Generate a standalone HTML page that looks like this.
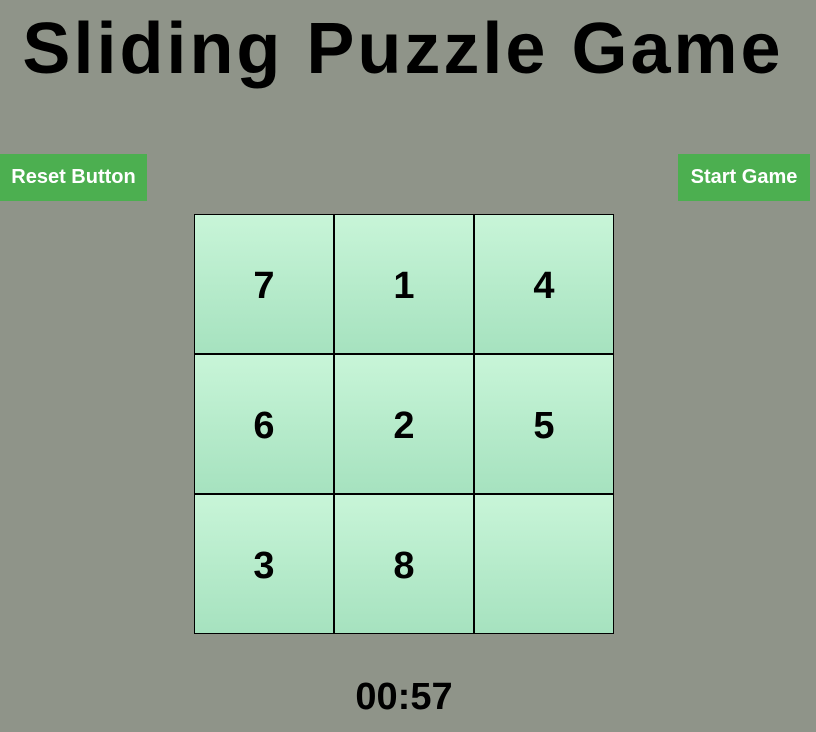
<!DOCTYPE html>
<html><head><style>
html,body{margin:0;padding:0;width:816px;height:732px;overflow:hidden;background:#8f9489;font-family:"Liberation Sans",sans-serif;}
h1{position:absolute;left:-5px;width:816px;top:5px;margin:0;text-align:center;font-size:72px;font-weight:bold;color:#000;letter-spacing:3px;line-height:88px;}
.btn{position:absolute;top:154px;height:47px;background:#4caf50;color:#fff;font-weight:bold;font-size:20px;line-height:47px;text-align:center;}
.grid{position:absolute;left:194px;top:214px;width:420px;height:420px;}
.t{position:absolute;width:138px;height:138px;border:1px solid #000;background:linear-gradient(#c8f5d8,#a6e2bf);font-weight:bold;font-size:38px;line-height:142px;text-align:center;color:#000;}
.timer{position:absolute;left:0;width:808px;top:676px;text-align:center;font-weight:bold;font-size:38px;letter-spacing:0px;}
</style></head><body>
<h1>Sliding Puzzle Game</h1>
<div class="btn" style="left:0;width:147px;">Reset Button</div>
<div class="btn" style="left:678px;width:132px;">Start Game</div>
<div class="grid">
<div class="t" style="left:0;top:0">7</div>
<div class="t" style="left:140px;top:0">1</div>
<div class="t" style="left:280px;top:0">4</div>
<div class="t" style="left:0;top:140px">6</div>
<div class="t" style="left:140px;top:140px">2</div>
<div class="t" style="left:280px;top:140px">5</div>
<div class="t" style="left:0;top:280px">3</div>
<div class="t" style="left:140px;top:280px">8</div>
<div class="t" style="left:280px;top:280px"></div>
</div>
<div class="timer">00:57</div>
</body></html>
